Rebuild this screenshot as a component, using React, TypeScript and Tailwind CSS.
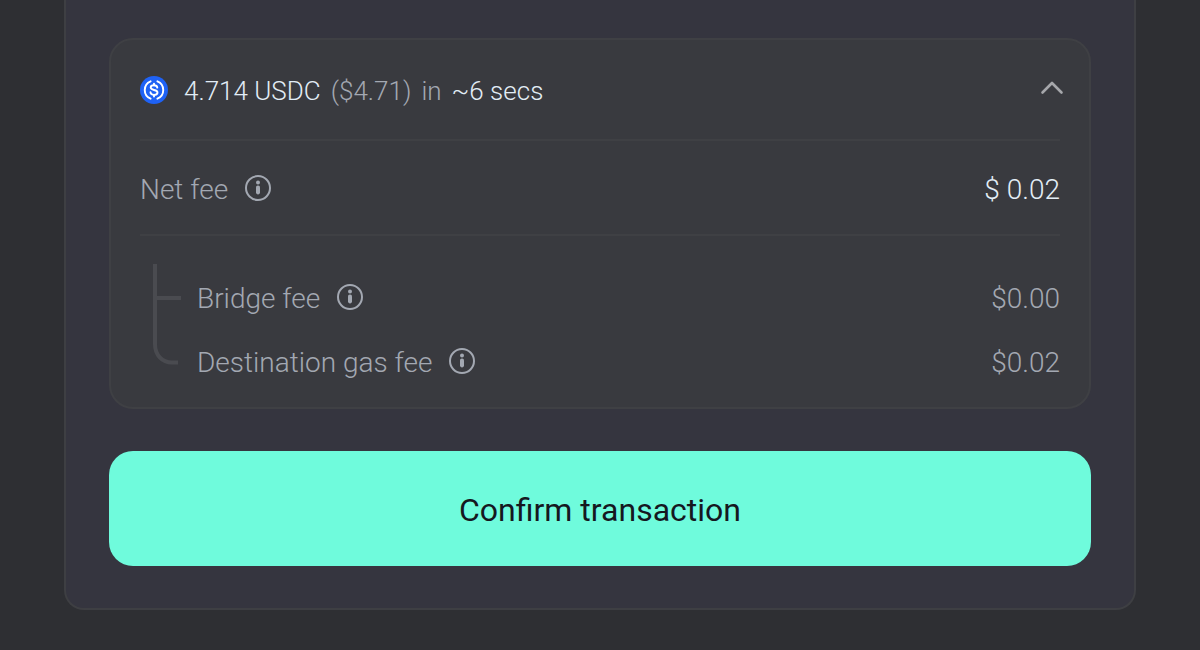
import { useState } from "react";

function InfoIcon() {
  return (
    <svg viewBox="0 0 28 28" className="size-7" fill="none" aria-hidden="true">
      <circle cx="14" cy="14" r="12" stroke="currentColor" strokeWidth="2" />
      <circle cx="14" cy="8.6" r="2" fill="currentColor" />
      <rect x="12" y="11.4" width="4" height="9" rx="1.8" fill="currentColor" />
    </svg>
  );
}

function UsdcIcon() {
  return (
    <svg viewBox="0 0 28 28" className="size-7 shrink-0" fill="none" aria-hidden="true">
      <circle cx="14" cy="14" r="14" fill="#1f62f5" />
      <g stroke="#fff" strokeWidth="1.9" strokeLinecap="round">
        <path d="M10.6 5.3a9.4 9.4 0 0 0 0 17.4" />
        <path d="M17.4 5.3a9.4 9.4 0 0 1 0 17.4" />
        <path d="M17.3 11.6c-.2-1.6-1.5-2.4-3.3-2.4-2 0-3.3.9-3.3 2.3 0 3.3 6.8 1.6 6.8 5 0 1.5-1.5 2.4-3.5 2.4s-3.4-.9-3.5-2.6" />
        <path d="M14 7.6v1.6M14 18.9v1.6" />
      </g>
    </svg>
  );
}

function Fee({ label, value }: { label: string; value: string }) {
  return (
    <div className="flex h-16 items-center justify-between">
      <dt className="flex items-center gap-4">
        {label}
        <button type="button" aria-label={"About " + label} className="pb-1">
          <InfoIcon />
        </button>
      </dt>
      <dd>{value}</dd>
    </div>
  );
}

export default function App() {
  const [open, setOpen] = useState(true);
  return (
    <main className="min-h-screen bg-[#2e2f33] px-16 pb-10 font-['Roboto',sans-serif] text-[28px] leading-9 font-light text-[#a3a8b2]">
      <section className="rounded-b-[20px] border-2 border-t-0 border-[#3e3f43] bg-[#35353f] px-[43px] pt-[38px] pb-[42px]">
        <div className="rounded-3xl border-2 border-[#3f4044] bg-[#393a3f] px-[29px]">
          <button
            type="button"
            aria-expanded={open}
            onClick={() => setOpen(!open)}
            className="flex h-[101px] w-full items-center justify-between border-b-2 border-[#3f4044] text-left"
          >
            <span className="flex items-center gap-4">
              <UsdcIcon />
              <span className="flex flex-wrap gap-x-2.5 pt-0.5 text-[26px]">
                <span className="text-[#e2edf6]">4.714 USDC</span>
                <span>($4.71)</span>
                <span>in</span>
                <span className="text-[#e2edf6]">~6 secs</span>
              </span>
            </span>
            <svg viewBox="0 0 24 24" className="-mr-1 size-6 shrink-0" fill="none" aria-hidden="true">
              <path d="M2.500 14.500L12 5l9.500 9.500" stroke="#a6a7ab" strokeWidth="2.6" strokeLinecap="round" strokeLinejoin="round" />
            </svg>
          </button>
          {open && (
            <dl>
              <div className="flex h-[95px] items-center justify-between border-b-2 border-[#3f4044] pt-1">
                <dt className="flex items-center gap-4">
                  Net fee
                  <button type="button" aria-label="About Net fee" className="pb-1">
                    <InfoIcon />
                  </button>
                </dt>
                <dd className="text-[#e2edf6]">$ 0.02</dd>
              </div>
              <div className="flex gap-4 pt-7 pb-3">
                <svg viewBox="0 0 28 102" className="ml-[13px] h-[102px] w-7 shrink-0" fill="none" stroke="#4a4b50" strokeWidth="4" aria-hidden="true">
                  <path d="M2 0v80c0 11 7 18.500 17 18.500h6M2 34h26" />
                </svg>
                <div className="flex-1 pt-[3px]">
                  <Fee label="Bridge fee" value="$0.00" />
                  <Fee label="Destination gas fee" value="$0.02" />
                </div>
              </div>
            </dl>
          )}
        </div>
        <button type="button" className="mt-[42px] h-[115px] w-full rounded-3xl bg-[#6ffbdc] pt-0.5 text-[32px] font-normal text-[#15181f]">
          Confirm transaction
        </button>
      </section>
    </main>
  );
}
